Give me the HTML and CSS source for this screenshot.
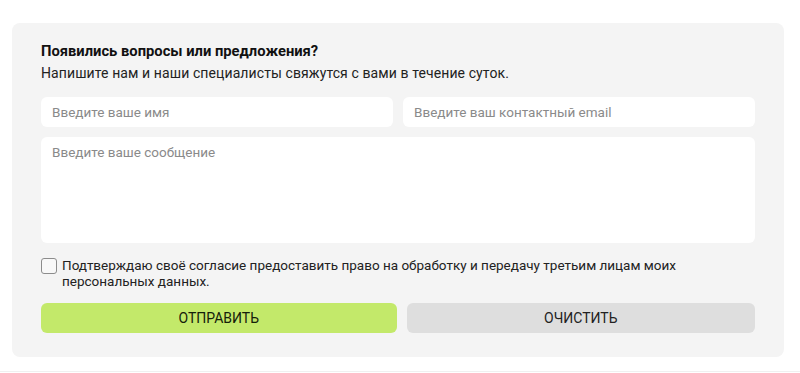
FILE: index.html
```html
<!DOCTYPE html>
<html lang="ru">
<head>
<meta charset="utf-8">
<link rel="stylesheet" href="styles.css">
</head>
<body>
<div class="page">
  <form class="card">
    <h2 class="title">Появились вопросы или предложения?</h2>
    <p class="lead">Напишите нам и наши специалисты свяжутся с вами в течение суток.</p>
    <div class="row inputs">
      <input class="field" type="text" placeholder="Введите ваше имя">
      <input class="field" type="text" placeholder="Введите ваш контактный email">
    </div>
    <textarea class="field area" placeholder="Введите ваше сообщение"></textarea>
    <label class="agree">
      <span class="box"></span>
      <span class="agree-text">Подтверждаю своё согласие предоставить право на обработку и передачу третьим лицам моих персональных данных.</span>
    </label>
    <div class="row buttons">
      <button class="btn send" type="button">ОТПРАВИТЬ</button>
      <button class="btn clear" type="button">ОЧИСТИТЬ</button>
    </div>
  </form>
  <div class="rule"></div>
</div>
</body>
</html>
```

FILE: styles.css
```css
* { box-sizing: border-box; }
html, body { margin: 0; padding: 0; background: #fff; }
body { font-family: Roboto, "Liberation Sans", sans-serif; color: #222; }
.page { padding: 23px 16px 0 12px; }
.card {
  background: #f4f4f4;
  border-radius: 8px;
  padding: 18px 29px 24px 29px;
  display: flex;
  flex-direction: column;
}
.title {
  margin: 0;
  font-size: 14.75px;
  font-weight: 700;
  line-height: 20px;
  color: #111;
}
.lead {
  margin: 3px 0 0;
  font-size: 14px;
  letter-spacing: 0.1px;
  line-height: 18px;
  color: #222;
}
.row { display: flex; gap: 10px; }
.inputs { margin-top: 15px; }
.inputs .field { flex: 1 1 0; }
.field {
  min-width: 0;
  height: 30px;
  border: none;
  border-radius: 6px;
  background: #fff;
  padding: 0 11px;
  font-family: Roboto, "Liberation Sans", sans-serif;
  font-size: 13.5px;
  color: #222;
  outline: none;
}
.field::placeholder { color: #8a8a8a; }
.area {
  flex: none;
  margin-top: 10px;
  height: 106px;
  padding: 7px 11px;
  resize: none;
  line-height: 17px;
}
.agree {
  display: flex;
  align-items: flex-start;
  gap: 5px;
  margin-top: 14px;
  font-size: 13.5px;
  line-height: 16px;
  color: #222;
}
.box {
  flex: none;
  width: 16px;
  height: 16px;
  margin-top: 1px;
  border: 1px solid #8c8c8c;
  border-radius: 3px;
  background: #f8f8f8;
}
.buttons { margin-top: 14px; }
.btn {
  flex: 1 1 auto;
  height: 30px;
  border: none;
  border-radius: 6px;
  font-family: Roboto, "Liberation Sans", sans-serif;
  font-size: 14px;
  cursor: pointer;
}
.send { background: #c3e96a; color: #15200a; }
.clear { background: #dedede; color: #222; }
.rule { margin-top: 14px; border-top: 1px solid #f0f0f0; margin-left: -12px; margin-right: -16px; }
```
